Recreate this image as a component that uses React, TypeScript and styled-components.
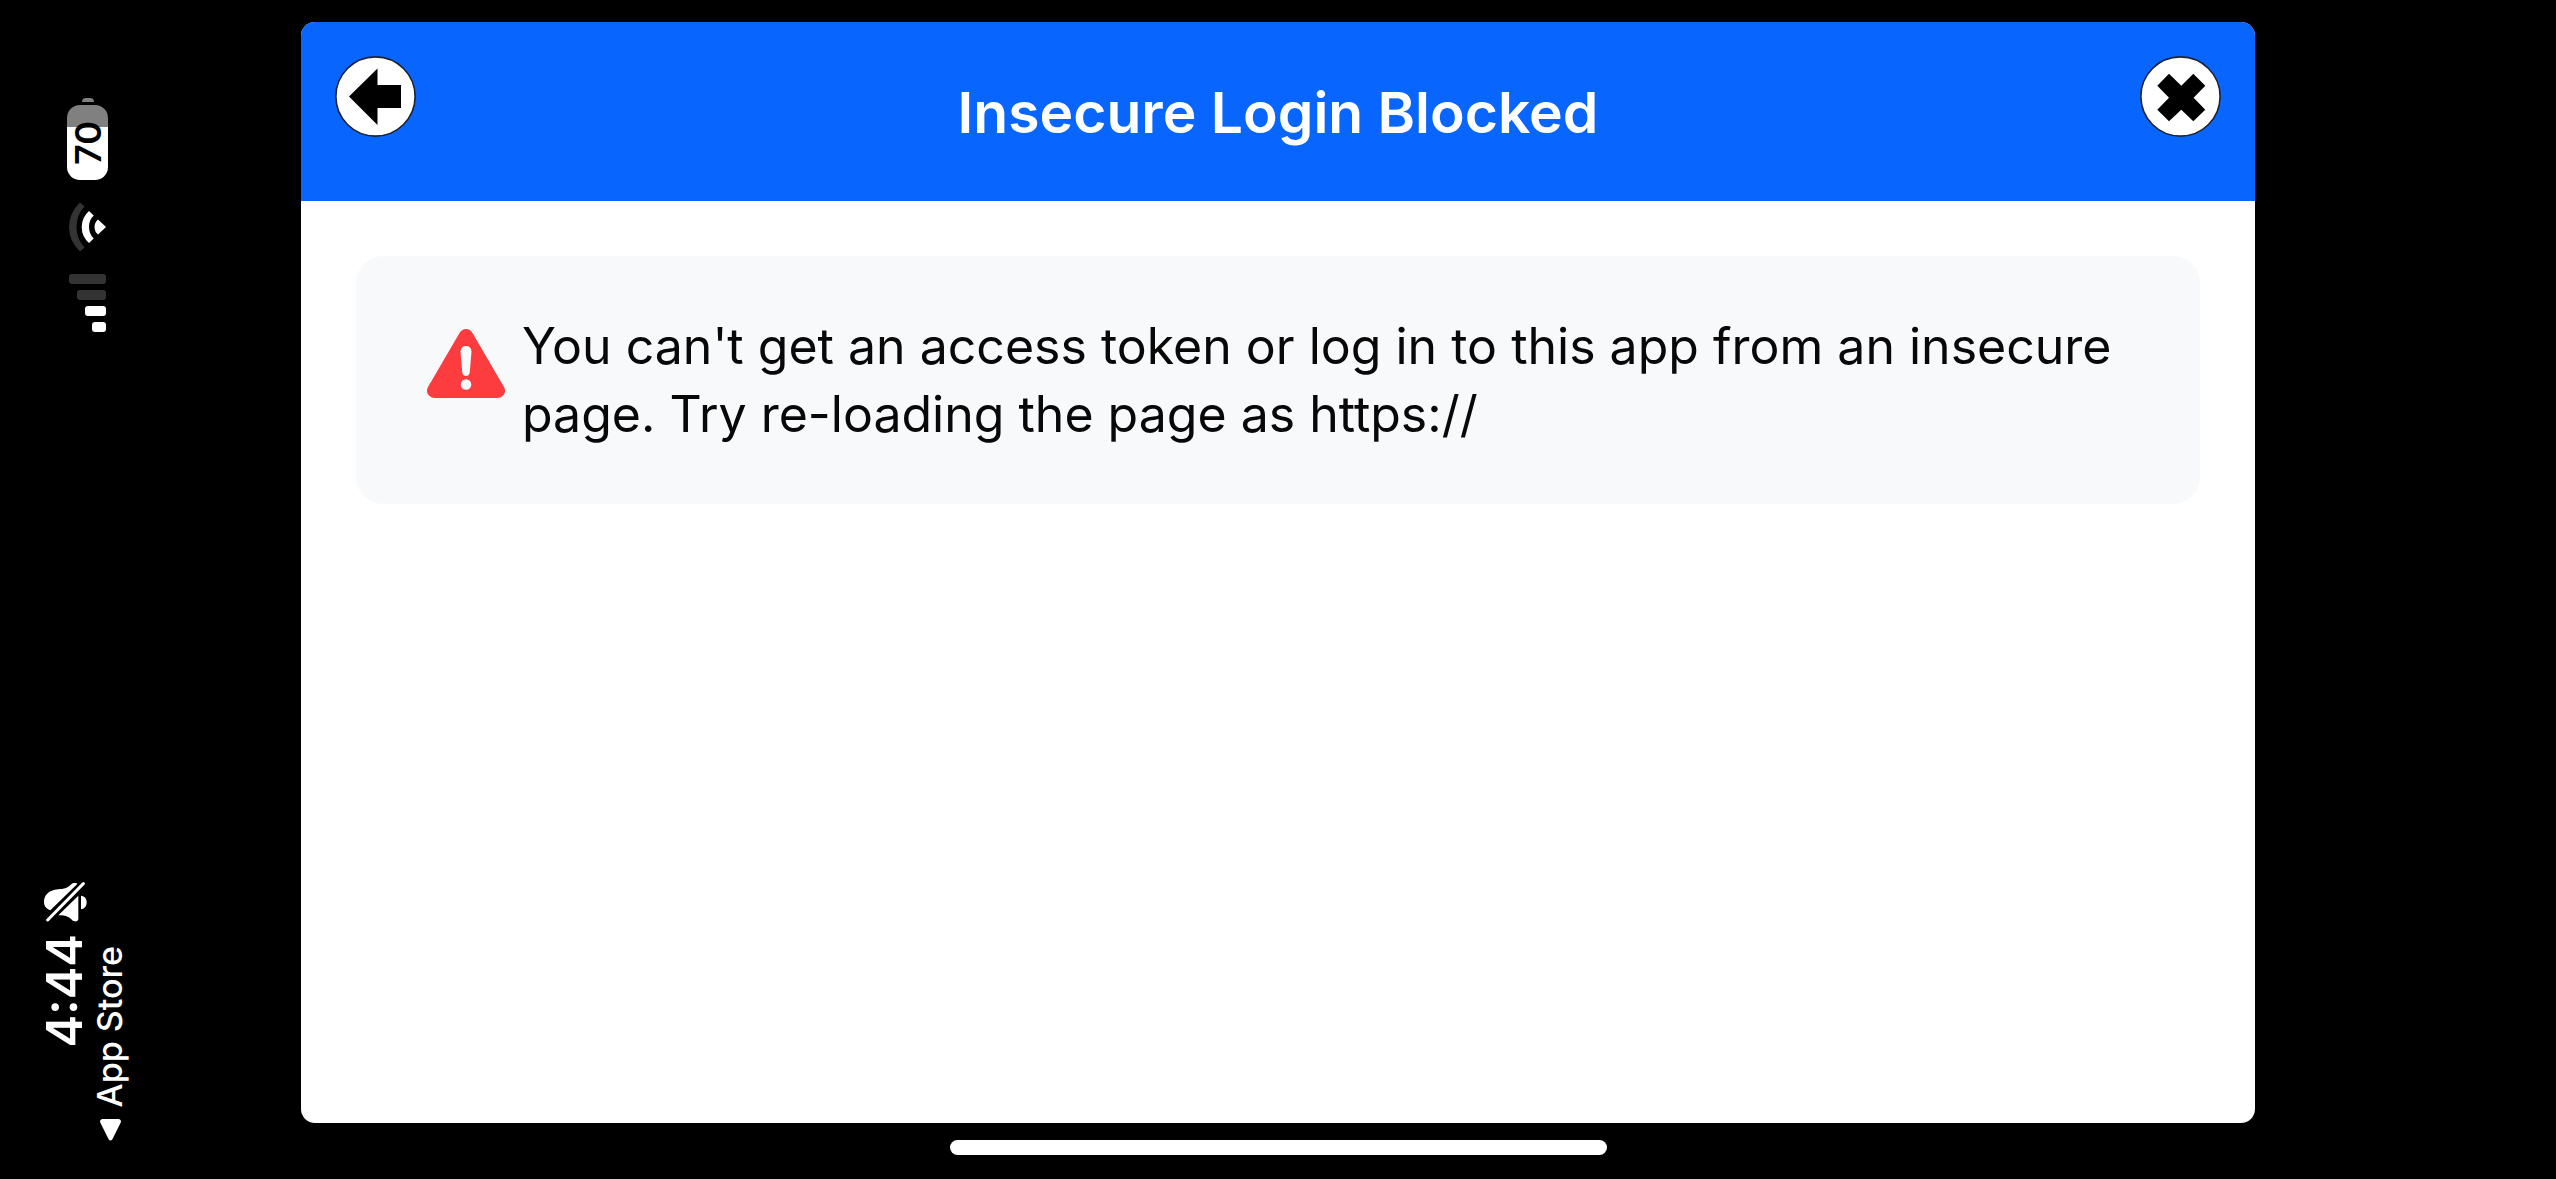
import React from "react";
import styled, { createGlobalStyle } from "styled-components";

const GlobalStyle = createGlobalStyle`
  *, *::before, *::after { box-sizing: border-box; }
  body {
    margin: 0;
    background: #000;
    font-family: Inter, "Liberation Sans", sans-serif;
  }
`;

const Screen = styled.div`
  display: grid;
  grid-template-columns: 301px minmax(0, 1fr) 301px;
  min-height: 100vh;
  background: #000;
`;

const StatusRail = styled.aside`
  display: flex;
  flex-direction: column;
  justify-content: space-between;
  padding: 98px 0 38px 40px;
  color: #fff;
`;

const StatusIcons = styled.div`
  display: flex;
  flex-direction: column;
  align-items: flex-end;
  gap: 22px;
  width: 66px;
`;

const Battery = styled.div`
  display: flex;
  flex-direction: column;
  align-items: center;
  gap: 3px;
  width: 41px;
  margin-right: -2px;
`;

const BatteryNub = styled.div`
  width: 12px;
  height: 4px;
  border-radius: 6px 6px 0 0;
  background: #808080;
`;

const BatteryBody = styled.div`
  display: flex;
  align-items: center;
  justify-content: center;
  width: 41px;
  height: 75px;
  border-radius: 13px;
  background: linear-gradient(#808080 22px, #fff 22px);
`;

const Upward = styled.span<{ $size: number; $weight: number; $color?: string }>`
  writing-mode: vertical-rl;
  transform: rotate(180deg);
  white-space: nowrap;
  font-size: ${(p) => p.$size}px;
  line-height: 40px;
  font-weight: ${(p) => p.$weight};
  color: ${(p) => p.$color ?? "#fff"};
`;

const StatusText = styled.div`
  display: flex;
  align-items: flex-end;
`;

const Clock = styled.div`
  display: flex;
  flex-direction: column;
  align-items: center;
  gap: 12px;
  width: 50px;
  padding-bottom: 93px;
`;

const BackLink = styled.a`
  display: flex;
  flex-direction: column;
  align-items: center;
  gap: 12px;
  width: 40px;
  text-decoration: none;
`;

const Stage = styled.div`
  display: flex;
  flex-direction: column;
  padding-top: 22px;
`;

const Panel = styled.main`
  flex: 1;
  border-radius: 14px;
  overflow: hidden;
  background: #fff;
`;

const Header = styled.header`
  display: grid;
  grid-template-columns: 81px 1fr 81px;
  align-items: start;
  height: 179px;
  padding: 34px;
  background: #0866ff;
`;

const Title = styled.h1`
  margin: 0;
  padding-top: 21px;
  text-align: center;
  font-size: 57px;
  line-height: 72px;
  font-weight: 600;
  color: #fff;
`;

const RoundButton = styled.button`
  display: block;
  width: 81px;
  height: 81px;
  padding: 0;
  border: 0;
  border-radius: 50%;
  background: none;
  cursor: pointer;
`;

const Body = styled.div`
  padding: 55px;
`;

const Alert = styled.section`
  display: flex;
  gap: 17px;
  padding: 56px 71px;
  border-radius: 27px;
  background: #f8f9fb;
`;

const AlertIcon = styled.svg`
  flex: none;
  width: 78px;
  height: 69px;
  margin-top: 17px;
`;

const Message = styled.p`
  margin: 0;
  font-size: 50px;
  line-height: 68px;
  color: #080809;
`;

const HomeBar = styled.div`
  display: flex;
  justify-content: center;
  height: 56px;
  padding-top: 17px;

  &::before {
    content: "";
    width: 657px;
    height: 15px;
    border-radius: 8px;
    background: #fff;
  }
`;

const Wifi = () => (
  <svg width="37" height="50" viewBox="0 0 37 50" aria-label="Wi-Fi">
    <path d="M11 0.5Q0 11 0 25T11 49.5L15.5 45.5Q7.5 37 7.5 25T15.5 4.5Z" fill="#333" />
    <path d="M20 9Q12.7 15.5 12.7 25T20 41L24.7 36.5Q20 32 20 25T24.7 13.5Z" fill="#fff" />
    <path d="M29 17.5Q25.5 20.5 25.5 25T29 32.5L37 25Z" fill="#fff" />
  </svg>
);

const Signal = () => (
  <svg width="37" height="58" viewBox="0 0 37 58" aria-label="Signal strength">
    <rect x="0" y="0" width="37" height="10" rx="3" fill="#333" />
    <rect x="8" y="16" width="29" height="10" rx="3" fill="#333" />
    <rect x="16" y="32" width="21" height="10" rx="3" fill="#fff" />
    <rect x="23" y="48" width="14" height="10" rx="3" fill="#fff" />
  </svg>
);

const MutedBell = () => (
  <svg width="43" height="40" viewBox="42 68 129 120" aria-label="Silent mode" fill="#fff">
    <path d="M61 153C50 148 42 142 42 127C42 108 55 95 74 91C90 88 104 90 115 82C124 76 125 71 133 71C138 71 142 72 142 74Z" />
    <path d="M85 168L145 109V178C145 184 140 187 134 186C126 185 124 177 114 173C106 169 97 168 85 168Z" />
    <path d="M153 109C164 110 170 118 170 129S164 148 153 150Z" />
    <path d="M53 182L160 73" stroke="#fff" strokeWidth="9" strokeLinecap="round" />
  </svg>
);

const Disc = () => (
  <circle cx="40.5" cy="40.5" r="39.6" fill="#fff" stroke="#1c2430" strokeWidth="1.6" />
);

const ArrowLeft = () => (
  <svg width="81" height="81" viewBox="0 0 81 81">
    <Disc />
    <path d="M14 40.5L42.5 12.5V29H66V52H42.5V69Z" />
  </svg>
);

const Cross = () => (
  <svg width="81" height="81" viewBox="0 0 81 81">
    <Disc />
    <path d="M17.3 29.7L29 17.7L41.3 29.7L53.3 17.7L65.3 29.7L53.6 41.7L65.3 53.7L53.3 65.3L41.3 53.7L29 65.3L17.3 53.7L29 41.7Z" />
  </svg>
);

export default function App() {
  return (
    <>
      <GlobalStyle />
      <Screen>
        <StatusRail>
          <StatusIcons>
            <Battery>
              <BatteryNub />
              <BatteryBody>
                <Upward $size={36} $weight={600} $color="#000">70</Upward>
              </BatteryBody>
            </Battery>
            <Wifi />
            <Signal />
          </StatusIcons>
          <StatusText>
            <Clock>
              <MutedBell />
              <Upward $size={49} $weight={600}>4:44</Upward>
            </Clock>
            <BackLink href="#app-store">
              <Upward $size={34} $weight={500}>App Store</Upward>
              <svg width="21" height="22" viewBox="0 0 21 22" fill="#fff" aria-hidden="true">
                <path d="M2 0H19Q22 1 20.5 4L12.5 20Q10.5 23 8.5 20L0.5 4Q-1 1 2 0Z" />
              </svg>
            </BackLink>
          </StatusText>
        </StatusRail>
        <Stage>
          <Panel>
            <Header>
              <RoundButton type="button" aria-label="Back">
                <ArrowLeft />
              </RoundButton>
              <Title>Insecure Login Blocked</Title>
              <RoundButton type="button" aria-label="Close">
                <Cross />
              </RoundButton>
            </Header>
            <Body>
              <Alert role="alert">
                <AlertIcon viewBox="0 0 78 69" aria-hidden="true">
                  <path
                    d="M32.5 4Q35 0 39 0T45.500 4L77 58Q79.500 63 76 66.500Q74 69 70 69H8Q4 69 2 66.500Q-1.500 63 1 58Z"
                    fill="#fc3c3f"
                  />
                  <path d="M33.5 22.5Q34 17 39 17T44.500 22.500L42.800 43Q42.300 47 39 47T35.200 43Z" fill="#f8f9fb" />
                  <circle cx="39" cy="55.5" r="5.3" fill="#f8f9fb" />
                </AlertIcon>
                <Message>
                  You can't get an access token or log in to this app from an insecure page. Try
                  re-loading the page as https://
                </Message>
              </Alert>
            </Body>
          </Panel>
          <HomeBar />
        </Stage>
      </Screen>
    </>
  );
}
